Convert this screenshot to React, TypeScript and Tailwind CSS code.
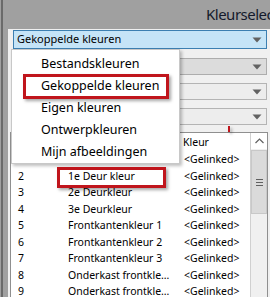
import React from "react";

function Arrow() {
  return (
    <svg width="10" height="6" viewBox="0 0 10 6" className="block">
      <path d="M0.5 0.5h9L5 5.5z" fill="#626262" />
    </svg>
  );
}

const rows: [string, string][] = [
  ["", ""],
  ["2", "1e Deur kleur"],
  ["3", "2e Deurkleur"],
  ["4", "3e Deurkleur"],
  ["5", "Frontkantenkleur 1"],
  ["6", "Frontkantenkleur 2"],
  ["7", "Frontkantenkleur 3"],
  ["8", "Onderkast frontkleur 1"],
  ["9", "Onderkast frontkleur 2"],
];

export default function App() {
  return (
    <div className="relative w-[270px] h-[297px] overflow-hidden flex bg-[#a0a0a0] font-['Noto_Sans',sans-serif] text-black">
      {/* left window edge */}
      <div className="flex w-[8px] shrink-0">
        <div className="w-[1px] bg-[#a0a0a0]" />
        <div className="w-[2px] bg-[#6a6a6a]" />
        <div className="w-[5px] bg-[#a0a0a0]" />
      </div>

      <div className="flex-1 flex flex-col min-w-0">
        {/* title band */}
        <div className="h-[29px] shrink-0 pl-[198px] pt-[4px] whitespace-nowrap text-[15px] tracking-[-0.5px] leading-[20px] text-[#141a2c] overflow-hidden">
          Kleurselectie
        </div>

        {/* panel */}
        <div className="flex-1 bg-[#f0f0f0] px-[2px] flex flex-col">
          {/* combo 1 (active) */}
          <div className="ml-[3px] mt-[1px] w-[254px] h-[19px] border border-[#3c7fb1] bg-[#c5e4f7] flex items-center justify-between pl-[3px] pr-[4px] text-[11px]">
            <span className="whitespace-nowrap">Gekoppelde kleuren</span>
            <Arrow />
          </div>
          {/* combo 2 */}
          <div className="ml-[3px] mt-[9px] w-[254px] h-[17px] border border-[#adadad] bg-[#dcdcdc] flex items-center justify-end pr-[4px]">
            <Arrow />
          </div>
          {/* combo 3 */}
          <div className="ml-[3px] mt-[8px] w-[254px] h-[17px] border border-[#b4b4b4] bg-[#ededed] flex items-center justify-end pr-[4px]">
            <Arrow />
          </div>
          {/* combo 4 */}
          <div className="ml-[3px] mt-[8px] w-[254px] h-[17px] border border-[#b4b4b4] bg-[#ededed] flex items-center justify-end pr-[4px]">
            <Arrow />
          </div>

          {/* grid */}
          <div className="mt-[7px] w-[258px] flex-1 border border-[#8f8f8f] bg-white flex text-[10.5px]">
            <div className="flex-1 flex flex-col min-w-0">
              <div className="h-[19px] shrink-0 flex items-center">
                <div className="w-[52px] h-full border-r border-[#e5e5e5]" />
                <div className="w-[117px] h-full border-r border-[#e5e5e5]" />
                <div className="flex-1 h-full pl-[3px] flex items-center">Kleur</div>
              </div>
              {rows.map(([n, name], i) => (
                <div key={i} className="h-[16.5px] shrink-0 flex items-center whitespace-nowrap">
                  <div className="w-[52px] pl-[7px]">{n}</div>
                  <div className="w-[117px] pl-[5px] pr-[5px] overflow-hidden text-ellipsis">{name}</div>
                  <div className="flex-1 pl-[4px]">&lt;Gelinked&gt;</div>
                </div>
              ))}
            </div>
            {/* scrollbar */}
            <div className="w-[17px] shrink-0 border-l border-[#d0d0d0] bg-[#f0f0f0] flex flex-col">
              <div className="h-[16px] flex items-center justify-center bg-white">
                <svg width="9" height="6" viewBox="0 0 9 6">
                  <path d="M0.5 5L4.5 1L8.5 5" fill="none" stroke="#606060" strokeWidth="1.2" />
                </svg>
              </div>
              <div className="mt-[1px] h-[64px] bg-[#dadada] border border-[#c8c8c8] flex flex-col items-center justify-center gap-[2px]">
                <div className="w-[7px] h-[1px] bg-[#606060]" />
                <div className="w-[7px] h-[1px] bg-[#606060]" />
                <div className="w-[7px] h-[1px] bg-[#606060]" />
              </div>
            </div>
          </div>
        </div>
      </div>

      {/* dropdown popup */}
      <div className="absolute left-[11px] top-[49px] w-[169px] h-[115px] bg-white border border-[#c8c8c8] shadow-[2px_2px_3px_rgba(0,0,0,0.25)] pt-[3px] text-[12.5px]">
        {["Bestandskleuren", "Gekoppelde kleuren", "Eigen kleuren", "Ontwerpkleuren", "Mijn afbeeldingen"].map((t) => (
          <div key={t} className="h-[22px] flex items-center pl-[29px] whitespace-nowrap">
            {t}
          </div>
        ))}
      </div>

      {/* annotation boxes */}
      <div className="absolute left-[23px] top-[74px] w-[146px] h-[25px] border-[3px] border-[#c0151c] shadow-[2px_2px_3px_rgba(0,0,0,0.35)]" />
      <div className="absolute left-[57px] top-[167px] w-[109px] h-[21px] border-[3px] border-[#c0151c] shadow-[2px_2px_3px_rgba(0,0,0,0.35)]" />
      <div className="absolute left-[228px] top-[126px] w-[2px] h-[6px] bg-[#c0151c] shadow-[2px_2px_3px_rgba(0,0,0,0.3)]" />
    </div>
  );
}
